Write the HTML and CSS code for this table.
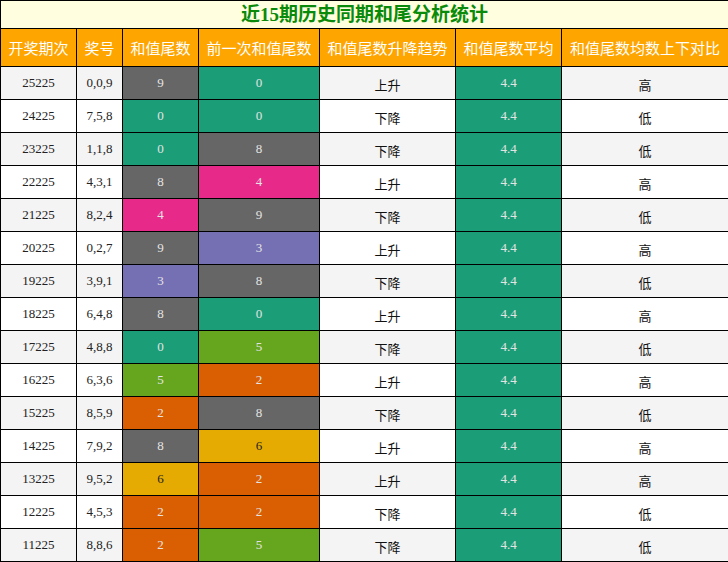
FILE: index.html
```html
<!DOCTYPE html>
<html lang="zh">
<head>
<meta charset="utf-8">
<title>近15期历史同期和尾分析统计</title>
<link rel="stylesheet" href="styles.css">
</head>
<body>
<table class="stats">
  <colgroup>
    <col class="c1"><col class="c2"><col class="c3"><col class="c4"><col class="c5"><col class="c6"><col class="c7">
  </colgroup>
  <thead>
    <tr class="title-row"><th colspan="7">近15期历史同期和尾分析统计</th></tr>
    <tr class="head-row">
      <th>开奖期次</th><th>奖号</th><th>和值尾数</th><th>前一次和值尾数</th><th>和值尾数升降趋势</th><th>和值尾数平均</th><th>和值尾数均数上下对比</th>
    </tr>
  </thead>
  <tbody>
    <tr><td>25225</td><td>0,0,9</td><td class="d9">9</td><td class="d0">0</td><td class="cn">上升</td><td class="d0">4.4</td><td class="cn">高</td></tr>
    <tr><td>24225</td><td>7,5,8</td><td class="d0">0</td><td class="d0">0</td><td class="cn">下降</td><td class="d0">4.4</td><td class="cn">低</td></tr>
    <tr><td>23225</td><td>1,1,8</td><td class="d0">0</td><td class="d9">8</td><td class="cn">下降</td><td class="d0">4.4</td><td class="cn">低</td></tr>
    <tr><td>22225</td><td>4,3,1</td><td class="d9">8</td><td class="d4">4</td><td class="cn">上升</td><td class="d0">4.4</td><td class="cn">高</td></tr>
    <tr><td>21225</td><td>8,2,4</td><td class="d4">4</td><td class="d9">9</td><td class="cn">下降</td><td class="d0">4.4</td><td class="cn">低</td></tr>
    <tr><td>20225</td><td>0,2,7</td><td class="d9">9</td><td class="d3">3</td><td class="cn">上升</td><td class="d0">4.4</td><td class="cn">高</td></tr>
    <tr><td>19225</td><td>3,9,1</td><td class="d3">3</td><td class="d9">8</td><td class="cn">下降</td><td class="d0">4.4</td><td class="cn">低</td></tr>
    <tr><td>18225</td><td>6,4,8</td><td class="d9">8</td><td class="d0">0</td><td class="cn">上升</td><td class="d0">4.4</td><td class="cn">高</td></tr>
    <tr><td>17225</td><td>4,8,8</td><td class="d0">0</td><td class="d5">5</td><td class="cn">下降</td><td class="d0">4.4</td><td class="cn">低</td></tr>
    <tr><td>16225</td><td>6,3,6</td><td class="d5">5</td><td class="d2">2</td><td class="cn">上升</td><td class="d0">4.4</td><td class="cn">高</td></tr>
    <tr><td>15225</td><td>8,5,9</td><td class="d2">2</td><td class="d9">8</td><td class="cn">下降</td><td class="d0">4.4</td><td class="cn">低</td></tr>
    <tr><td>14225</td><td>7,9,2</td><td class="d9">8</td><td class="d6">6</td><td class="cn">上升</td><td class="d0">4.4</td><td class="cn">高</td></tr>
    <tr><td>13225</td><td>9,5,2</td><td class="d6">6</td><td class="d2">2</td><td class="cn">上升</td><td class="d0">4.4</td><td class="cn">高</td></tr>
    <tr><td>12225</td><td>4,5,3</td><td class="d2">2</td><td class="d2">2</td><td class="cn">下降</td><td class="d0">4.4</td><td class="cn">低</td></tr>
    <tr><td>11225</td><td>8,8,6</td><td class="d2">2</td><td class="d5">5</td><td class="cn">下降</td><td class="d0">4.4</td><td class="cn">低</td></tr>
  </tbody>
</table>
</body>
</html>
```
FILE: styles.css
```css
html, body {
  margin: 0;
  padding: 0;
  background: #fff;
}
.stats {
  border-collapse: collapse;
  table-layout: fixed;
  width: 728px;
  font-family: "Liberation Serif", "Noto Sans CJK SC", serif;
  font-size: 13px;
  line-height: 16px;
  color: #222;
}
.c1 { width: 76px; }
.c2 { width: 46px; }
.c3 { width: 76px; }
.c4 { width: 121px; }
.c5 { width: 136px; }
.c6 { width: 106px; }
.c7 { width: 167px; }
.stats th, .stats td {
  border: 1px solid #000;
  text-align: center;
  padding: 0;
}
.title-row th {
  height: 27px;
  background: #ffffe0;
  color: #0a8a0a;
  font-family: "Liberation Serif", "Noto Sans CJK SC", serif;
  font-size: 19px;
  line-height: 22px;
  font-weight: bold;
}
.head-row th {
  height: 37px;
  background: #ffa500;
  color: #fff;
  font-family: "Noto Sans CJK SC", sans-serif;
  font-size: 15px;
  line-height: 20px;
  font-weight: normal;
}
.stats tbody td {
  height: 32px;
}
.stats tbody tr:nth-child(odd) td { background: #f4f4f4; }
.stats tbody tr:nth-child(even) td { background: #fff; }
.stats tbody tr td.cn {
  font-family: "Noto Sans CJK SC", sans-serif;
  font-size: 13px;
  color: #111;
  height: 28px;
  padding-top: 4px;
}
.stats tbody tr td.d0 { background: #1b9e77; color: #e4e4e4; }
.stats tbody tr td.d2 { background: #d95f02; color: #e4e4e4; }
.stats tbody tr td.d3 { background: #7570b3; color: #e4e4e4; }
.stats tbody tr td.d4 { background: #e7298a; color: #e4e4e4; }
.stats tbody tr td.d5 { background: #66a61e; color: #e4e4e4; }
.stats tbody tr td.d6 { background: #e6ab02; color: #222; }
.stats tbody tr td.d9 { background: #666666; color: #e4e4e4; }
```
